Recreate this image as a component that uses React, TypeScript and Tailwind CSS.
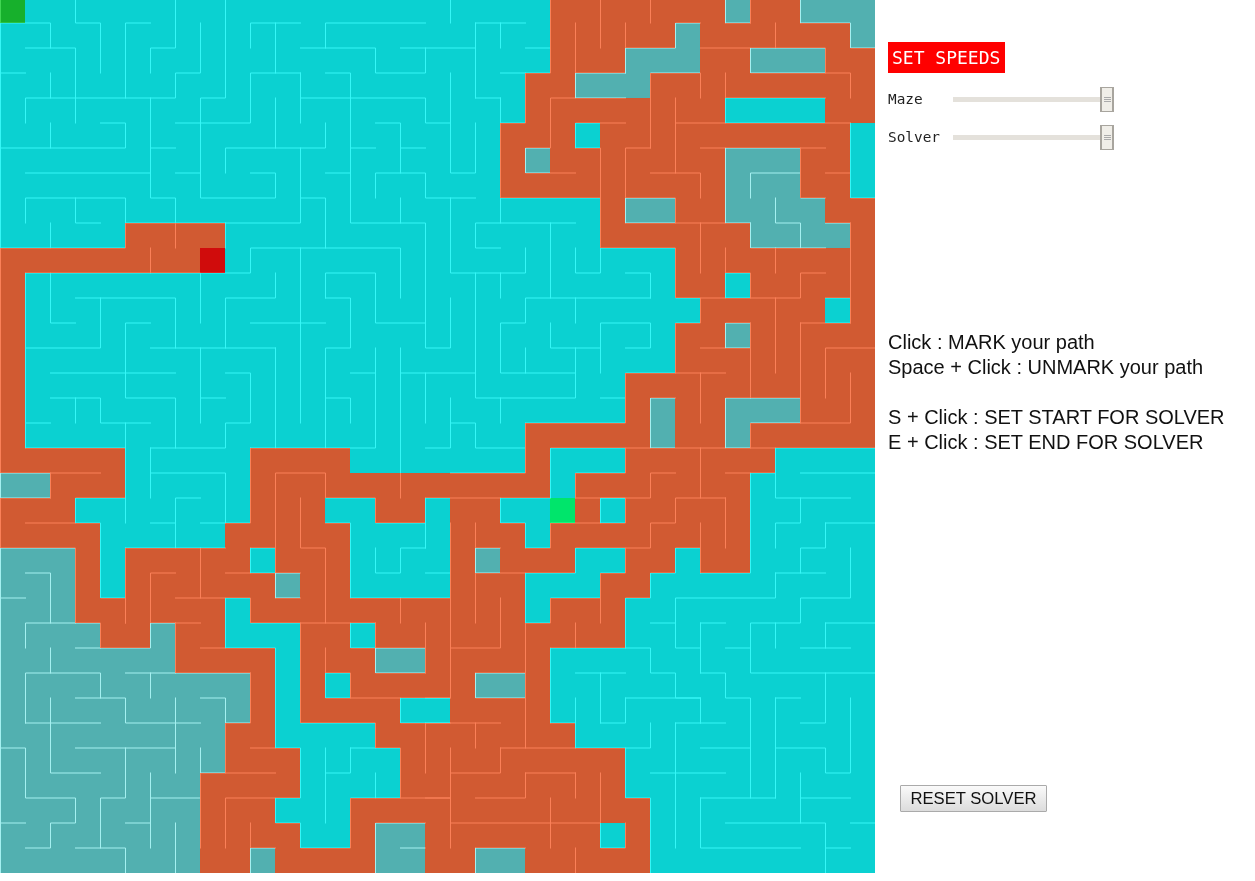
import React from "react";

const CELL = 25;

const COLORS: Record<string, string> = {
  c: "#0bd1d1",
  o: "#d15a32",
  g: "#52b0b0",
  s: "#17b02c",
  r: "#d00c0c",
  e: "#00e56b",
};

// one row per line, colour + run length
const ROWS = [
  "s1 c21 o7 g1 o2 g3",
  "c22 o5 g1 o6 g1",
  "c22 o3 g3 o2 g3 o2",
  "c21 o2 g3 o9",
  "c21 o8 c4 o2",
  "c20 o3 c1 o10 c1",
  "c20 o1 g1 o7 g3 o2 c1",
  "c20 o9 g3 o2 c1",
  "c24 o1 g2 o2 g4 o2",
  "c5 o4 c15 o6 g4 o1",
  "o8 r1 c18 o8",
  "o1 c26 o2 c1 o5",
  "o1 c27 o5 c1 o1",
  "o1 c26 o2 g1 o5",
  "o1 c26 o8",
  "o1 c24 o10",
  "o1 c24 o1 g1 o2 g3 o3",
  "o1 c20 o5 g1 o2 g1 o5",
  "o5 c5 o4 c7 o1 c3 o6 c4",
  "g2 o3 c5 o12 c1 o7 c5",
  "o3 c7 o3 c2 o2 c1 o2 c2 e1 o1 c1 o5 c5",
  "o4 c5 o5 c4 o3 c1 o8 c5",
  "g3 o1 c1 o5 c1 o3 c4 o1 g1 o3 c2 o2 c1 o2 c5",
  "g3 o1 c1 o6 g1 o2 c4 o3 c3 o2 c9",
  "g3 o6 c1 o11 c1 o3 c10",
  "g4 o2 g1 o2 c3 o2 c1 o10 c10",
  "g7 o4 c1 o3 g2 o5 c13",
  "g10 o1 c1 o1 c1 o5 g2 o1 c13",
  "g10 o1 c1 o4 c2 o4 c13",
  "g9 o2 c4 o8 c12",
  "g9 o3 c4 o9 c10",
  "g8 o4 c4 o9 c10",
  "g8 o3 c3 o12 c9",
  "g8 o4 c2 o1 g2 o7 c1 o1 c9",
  "g8 o2 g1 o4 g2 o2 g2 o5 c9",
];

// walls in grid units
const WALLS = `M0 0V35
M3 0V1H4V3 M0 1H2V2 M1 2H3V5 M6 1H5V4 M7 0V2H6V3 M8 1V3H7V4H1V5 M9 0V4H8V8H11V7H10
M10 2V1H12 M11 1V3 M12 3H10V5H7 M12 3V5 M12 4H17V5H18 M11 4V6 M9 7V6H13V5 M9 9H12V6 M12 8H13V10
M13 3H14V9H17V14H18V12 M16 8V9 M12 2H15V3H17V2 M16 2H19 M13 2V1H17
M0 6H5V5H4 M2 5V6 M0 3H1 M2 3V4 M6 4V8H7V9 M6 6H7 M1 7H6 M7 7H8 M1 9V8H5V9 M3 8V9H4 M2 9V10
M5 9H9 M5 9V10H0 M7 9V10 M6 10V11 M9 9V10 M1 11H10V10H16V12 M1 11V18 M2 11V13H3 M8 11V13
M11 11V12H9V14 M12 10V17 M13 12V11H15V13H17 M13 12H14V14H13V18
M3 12H7V14 M4 12V14H1 M6 14H11 M6 13H5V16H7V18 M6 18H9V17H10V15H9 M2 15H7 M8 14V17 M8 16H9 M11 14V18 M10 13H13
M2 16H4V17H6 M3 16V17 M5 17V21 M1 17H2 M1 18H5 M10 18H15V14 M14 15H15 M13 16H14V17
M16 14V20 M16 15H19 M17 15V17 M17 18H18V16 M18 17H19V18H21
M6 20V18 M6 19H9V21 M9 21H10V18 M8 20H7V22 M6 21H7 M8 21H9 M5 20H3V21 M1 21H4V24H5V25 M5 22V25 M5 22H9
M2 19V20 M0 19H4 M0 20H2 M0 22H3V25 M1 23H2V25 M0 24H1 M7 23H6V25 M8 22V24 M7 24H9
M9 26V24H10V25H15 M7 25H8 M7 25V27 M10 22V23 M9 23H11 M10 22H11 M11 23H12
M11 24V19H13V20H15V21H17V20 M17 22V21 M17 20H22 M15 22V23H16V22H17 M17 23H18 M12 20V22H13V25 M13 21H14V24
M11 24H12 M14 24H18 M16 24V25 M17 25V27 M14 25V26H17 M15 25V27H17 M12 25V29H15V30 M13 26V28H18 M13 27H14V28 M16 28V29H18
M8 26H11V30 M10 30H12V32H11V33H12V34H14V32H18 M11 32H9V34 M10 34H11 M10 33V35
M5 27H10 M6 27V28 M1 29V27H4V28 M3 28H5V29H8 M1 29H4 M2 26V27 M2 28V31H4 M1 26V25H4V26 M3 26H6V25H7
M7 28V31 M8 28H9V29H10V27 M9 29V31 M8 31H11 M8 30V34 M0 30H1V32H3V33H2V34H1 M0 33H1
M3 30H7 M5 30V32H4V34 M3 34H5V35 M6 31V34 M6 32H8 M5 33H6 M7 33V35 M15 35V33H17 M16 34H17
M14 30H16V32 M14 30V31H13 M13 30V33 M15 31V32 M17 29V31
M18 3V7H19V5 M18 0V1 M19 1V4 M19 1H21 M20 1V2 M20 4V9 M19 4H20 M20 5H21V3 M20 3H22V0 M21 2H22
M15 8V7H17V8H19 M15 5H16V7 M16 6H17 M14 6H15 M13 7H14 M18 8V11H21V10 M19 11V12 M20 11V12 M20 10H19V9H23 M20 8H24
M23 6V5H25 M23 6H24V10H27V12H28V13H27V15 M25 4H22V6H21V7H23
M23 1V4 M23 3H25 M24 0V2 M25 1V3 M25 2H27V1H28 M26 0V1 M26 6V3H28V4 M26 6H25V9 M25 8H27V9 M25 9H30 M27 4V7 M26 7H28V8 M27 5H34 M28 6H33
M28 2H30V3H34V4 M31 1V2H33V3 M30 2H31 M29 1H30 M29 0V1 M30 0V1 M32 0V1 M32 1H34V2H35 M29 3V5 M29 4H33
M32 6V8H33 M34 5V8H35 M33 7H34 M29 6V9 M32 7H30V8 M31 8V9H32V10 M33 9H34 M30 9V10H33 M34 9V13
M29 12V11H30V12 M28 12H32V11H33 M33 12H34 M29 10V11 M31 10V11 M28 9V11
M19 12V16H23V14 M22 13V14H24 M24 15V13H26V14H25 M23 12V13 M26 12H21V13H20V15H23 M21 14V15 M22 9V12 M23 10V11H24V10 M25 11H26V12
M20 16V17 M24 16H25 M21 18V17H25V15H29 M18 19H21V17 M22 20V18H25V19H23V20 M25 18H35
M26 18V16H27 M28 15V17 M29 18V16H32 M30 13V16 M29 14V13H30 M28 14H30 M31 12V15 M32 13V17 M32 13H34 M33 16V14H35 M34 15V17H30V18
M31 18V20H34 M29 19H31 M32 19H35 M30 19V23H28 M28 18V20 M29 20H27V21H26V22H25V23H24V25 M29 20V22 M28 21V23 M28 22H27V23H26V24H25V26 M22 26H26V27H27V28H28V29 M25 28H28
M24 24H22V25H21 M21 22V21H20V20 M21 22H22V21H25V20H24V21 M23 20H26V19H27 M19 23H23V22H25 M21 23V30
M19 22H20 M18 21V28H17 M19 21V25 M20 24V26H18 M19 27V28H21 M19 27H21 M17 29H20 M19 29V30 M20 30H23 M20 30V31H18 M18 30V34
M21 31H23 M21 31V32H19 M17 32H18 M23 28V30 M23 31V32 M22 29H23 M22 26V29 M24 31V34H25V33 M18 33H24 M23 34V35 M22 32V34
M25 30V32H26V35 M23 30H26V29 M24 29H25V28 M24 27V29 M23 27H25 M19 34H21 M19 34V35 M23 25V26
M32 20V21H31V22 M33 21H35 M33 21V22H32V23 M31 23H33 M31 23V24H27V26H28 M28 25V27 M28 25H29 M28 27H29V28H30V32 M28 32H31 M31 28V32 M31 28H32
M26 25H27 M29 26H30 M34 22V24H32V25H30V27H35 M31 25V26 M33 25V26 M33 25H35 M32 26H34
M33 27V29H32 M34 28V31H33V30H31 M32 31V33 M32 32H34 M29 33H33V35 M33 34H34 M34 33H35 M28 32V34H32 M27 29V34 M27 29H29 M28 28V29 M28 30H30 M26 31H29`;

const parseRow = (row: string) => {
  let x = 0;
  return row.split(" ").map((run) => {
    const start = x;
    const len = Number(run.slice(1));
    x += len;
    return { code: run[0], start, len };
  });
};

function Maze() {
  const runs = ROWS.flatMap((row, r) => parseRow(row).map((run) => ({ ...run, r })));
  return (
    <svg width={875} height={873} viewBox="0 2 875 873" className="block shrink-0">
      <defs>
        <clipPath id="gray-cells">
          {runs
            .filter((run) => run.code === "g")
            .map((run) => (
              <rect
                key={`${run.r}-${run.start}`}
                x={run.start * CELL}
                y={run.r * CELL}
                width={run.len * CELL}
                height={CELL}
              />
            ))}
        </clipPath>
      </defs>
      {runs.map((run) => (
        <rect
          key={`${run.r}-${run.start}`}
          x={run.start * CELL}
          y={run.r * CELL}
          width={run.len * CELL}
          height={CELL}
          fill={COLORS[run.code]}
        />
      ))}
      <g transform="translate(0.5 0) scale(25)">
        <path
          d={WALLS}
          fill="none"
          stroke="rgb(42,38,38)"
          strokeWidth={1}
          strokeLinecap="square"
          vectorEffect="non-scaling-stroke"
          className="mix-blend-plus-lighter"
        />
      </g>
      {/* walls read brighter on the grey cells */}
      <g clipPath="url(#gray-cells)" className="mix-blend-plus-lighter">
        <g transform="translate(0.5 0) scale(25)">
          <path
            d={WALLS}
            fill="none"
            stroke="rgb(40,26,26)"
            strokeWidth={1}
            strokeLinecap="square"
            vectorEffect="non-scaling-stroke"
          />
        </g>
      </g>
    </svg>
  );
}

function Slider({ label }: { label: string }) {
  return (
    <div className="flex items-center h-[25px]">
      <span className="w-[65px] text-[14.4px] text-[#222] font-['DejaVu_Sans_Mono',monospace]">{label}</span>
      <div className="w-[147px] h-[5px] bg-[#e4e1db]" />
      <div className="w-[14px] h-[25px] border border-[#a8a59e] border-x-2 bg-[#f0eee8] flex flex-col items-center justify-center gap-[1px]">
        <div className="w-[7px] h-[1px] bg-[#aaa]" />
        <div className="w-[7px] h-[1px] bg-[#aaa]" />
        <div className="w-[7px] h-[1px] bg-[#aaa]" />
      </div>
    </div>
  );
}

export default function App() {
  return (
    <div className="flex bg-white min-h-[881px] font-['Liberation_Sans',Arial,sans-serif]">
      <Maze />
      <div className="pl-[13px] pt-[42px] flex flex-col flex-1">
        <div className="w-[117px] h-[31px] leading-[32px] pl-[4px] bg-[#ff0000] text-white text-[18px] whitespace-pre font-['DejaVu_Sans_Mono',monospace]">
          SET SPEEDS
        </div>
        <div className="mt-[14px] flex flex-col gap-[13px]">
          <Slider label="Maze" />
          <Slider label="Solver" />
        </div>
        <div className="mt-[180px] text-[20px] leading-[25px] text-[#111]">
          <div>Click : MARK your path</div>
          <div>Space + Click : UNMARK your path</div>
          <div className="mt-[25px]">S + Click : SET START FOR SOLVER</div>
          <div>E + Click : SET END FOR SOLVER</div>
        </div>
        <button className="mt-[330px] ml-[12px] w-[147px] h-[27px] border border-[#aaa] rounded-[1px] bg-gradient-to-b from-[#fafafa] to-[#dcdcdc] text-[16.67px] text-[#111] font-['Liberation_Sans',Arial,sans-serif]">
          RESET SOLVER
        </button>
      </div>
    </div>
  );
}
